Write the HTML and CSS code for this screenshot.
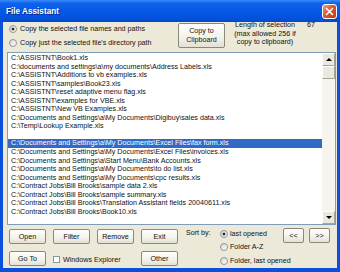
FILE: index.html
```html
<!doctype html>
<html lang="en">
<head>
    <meta charset="UTF-8"/>
    <title>File Assistant</title>
    <link rel="stylesheet" href="styles.css">
</head>
<body>
<div class="window">
    <div class="titlebar">
        <span class="title">File Assistant</span>
        <span class="close">
            <svg width="9" height="9" viewBox="0 0 9 9">
                <path d="M1.5 1.5 L7.5 7.5 M7.5 1.5 L1.5 7.5" stroke="#fff" stroke-width="1.6" stroke-linecap="round"/>
            </svg>
        </span>
    </div>
    <div class="frame">
        <div class="top">
            <div class="copy-options">
                <div class="option"><span class="radio checked"></span>Copy the selected file names and paths</div>
                <div class="option"><span class="radio"></span>Copy just the selected file's directory path</div>
            </div>
            <button class="btn copy-btn">Copy to<br>Clipboard</button>
            <div class="length-info">Length of selection<br>(max allowed 256 if<br>copy to clipboard)</div>
            <div class="length-value">67</div>
        </div>

        <div class="listbox">
            <ul class="items">
                <li>C:\ASSISTNT\Book1.xls</li>
                <li>C:\documents and settings\a\my documents\Address Labels.xls</li>
                <li>C:\ASSISTNT\Additions to vb examples.xls</li>
                <li>C:\ASSISTNT\samples\Book23.xls</li>
                <li>C:\ASSISTNT\reset adaptive menu flag.xls</li>
                <li>C:\ASSISTNT\examples for VBE.xls</li>
                <li>C:\ASSISTNT\New VB Examples.xls</li>
                <li>C:\Documents and Settings\a\My Documents\Digibuy\sales data.xls</li>
                <li>C:\Temp\Lookup Example.xls</li>
                <li>&nbsp;</li>
                <li class="selected">C:\Documents and Settings\a\My Documents\Excel Files\fax form.xls</li>
                <li>C:\Documents and Settings\a\My Documents\Excel Files\invoices.xls</li>
                <li>C:\Documents and Settings\a\Start Menu\Bank Accounts.xls</li>
                <li>C:\Documents and Settings\a\My Documents\to do list.xls</li>
                <li>C:\Documents and Settings\a\My Documents\cpc results.xls</li>
                <li>C:\Contract Jobs\Bill Brooks\sample data 2.xls</li>
                <li>C:\Contract Jobs\Bill Brooks\sample summary.xls</li>
                <li>C:\Contract Jobs\Bill Brooks\Translation Assistant fields 20040611.xls</li>
                <li>C:\Contract Jobs\Bill Brooks\Book10.xls</li>
            </ul>
            <div class="scrollbar">
                <div class="sb-btn"><span class="arrow-up"></span></div>
                <div class="sb-thumb"></div>
                <div class="sb-track"></div>
                <div class="sb-btn"><span class="arrow-down"></span></div>
            </div>
        </div>

        <div class="bottom">
            <div class="btn-grid">
                <button class="btn">Open</button>
                <button class="btn">Filter</button>
                <button class="btn">Remove</button>
                <button class="btn">Exit</button>
                <button class="btn">Go To</button>
                <div class="explorer"><span class="checkbox"></span>Windows Explorer</div>
                <button class="btn">Other</button>
            </div>
            <div class="sort-label">Sort by:</div>
            <div class="sort-options">
                <div class="sort-option"><span class="radio checked"></span>last opened</div>
                <div class="sort-option"><span class="radio"></span>Folder A-Z</div>
                <div class="sort-option"><span class="radio"></span>Folder, last opened</div>
            </div>
            <div class="nav">
                <button class="btn nav-btn">&lt;&lt;</button>
                <button class="btn nav-btn">&gt;&gt;</button>
            </div>
        </div>
    </div>
</div>
</body>
</html>
```

FILE: styles.css
```css
* {
    box-sizing: border-box;
}

body {
    margin: 0;
    font-family: "Liberation Sans", Arial, sans-serif;
    font-size: 7.15px;
    color: #111;
}

.window {
    width: 340px;
    height: 272px;
    display: flex;
    flex-direction: column;
}

.titlebar {
    height: 22px;
    display: flex;
    align-items: center;
    justify-content: space-between;
    padding: 0 3px 0 6px;
    background: linear-gradient(#3a8cfb 0%, #0f64ec 14%, #0559e6 45%, #0453df 80%, #0348c9 100%);
}

.title {
    color: #fff;
    font-weight: bold;
    font-size: 8.2px;
    text-shadow: 1px 1px 0 #0a2a8a;
}

.close {
    width: 15px;
    height: 15px;
    border: 1px solid #fff;
    border-radius: 3px;
    background: linear-gradient(135deg, #f0a080, #d85a30 45%, #c03a10);
    display: flex;
    align-items: center;
    justify-content: center;
}

.frame {
    flex: 1;
    background: #ece9d8;
    border-left: 3px solid #0a50da;
    border-right: 3px solid #0a50da;
    border-bottom: 4px solid #0a50da;
    display: flex;
    flex-direction: column;
}

.top {
    height: 30px;
    display: flex;
    padding-left: 6px;
}

.copy-options {
    width: 169px;
}

.option {
    height: 14px;
    display: flex;
    align-items: center;
    gap: 3px;
    white-space: nowrap;
}

.radio {
    position: relative;
    flex: none;
    width: 8px;
    height: 8px;
    border-radius: 50%;
    border: 1px solid #8a96a2;
    background: linear-gradient(135deg, #d8d6cc, #fff);
}

.radio.checked::after {
    content: "";
    position: absolute;
    left: 2px;
    top: 2px;
    width: 2px;
    height: 2px;
    border-radius: 50%;
    background: #1e1e1e;
    box-shadow: 0 0 0 0.5px #555;
}

.btn {
    font: inherit;
    color: #111;
    padding: 0;
    border: 1px solid #8c8878;
    border-radius: 2px;
    background: linear-gradient(#fefefd, #f3f2ea 60%, #e3e0d3);
}

.copy-btn {
    width: 47px;
    height: 25px;
    margin-top: 1px;
    line-height: 8.5px;
}

.length-info {
    width: 66px;
    margin: -1px 0 0 7px;
    text-align: center;
    line-height: 8.5px;
}

.length-value {
    margin: -1px 0 0 9px;
    line-height: 8.5px;
}

.listbox {
    height: 173px;
    margin: 0 1px 0 4px;
    border: 1px solid #7f9db9;
    background: #fff;
    display: flex;
}

.items {
    flex: 1;
    list-style: none;
    margin: 0;
    padding: 1px 0 0;
    overflow: hidden;
}

.items li {
    line-height: 8.55px;
    padding-left: 3px;
    white-space: nowrap;
}

.items li.selected {
    background: #316ac5;
    color: #fff;
}

.scrollbar {
    width: 13px;
    display: flex;
    flex-direction: column;
    background: #f5f4ef;
}

.sb-btn,
.sb-thumb {
    height: 13px;
    background: #ebe9df;
    border: 1px solid;
    border-color: #fff #a8a598 #a8a598 #fff;
    display: flex;
    align-items: center;
    justify-content: center;
}

.sb-track {
    flex: 1;
}

.arrow-up {
    border-left: 3px solid transparent;
    border-right: 3px solid transparent;
    border-bottom: 3px solid #000;
}

.arrow-down {
    border-left: 3px solid transparent;
    border-right: 3px solid transparent;
    border-top: 3px solid #000;
}

.bottom {
    flex: 1;
    display: flex;
    padding: 2px 0 0 6px;
}

.btn-grid {
    display: grid;
    grid-template-columns: repeat(4, 37px);
    grid-template-rows: 15px 15px;
    gap: 7px;
    margin-top: 2px;
}

.explorer {
    grid-column: span 2;
    display: flex;
    align-items: center;
    gap: 3px;
    padding-top: 2px;
}

.checkbox {
    width: 7px;
    height: 7px;
    border: 1px solid #8a96a2;
    background: #fff;
}

.sort-label {
    width: 34px;
    margin-left: 8px;
    line-height: 13.5px;
}

.sort-options {
    width: 63px;
}

.sort-option {
    height: 13.5px;
    display: flex;
    align-items: center;
    gap: 2px;
    white-space: nowrap;
}

.nav {
    display: flex;
    gap: 5px;
    margin-top: 1px;
}

.nav-btn {
    width: 21px;
    height: 15px;
}
```
